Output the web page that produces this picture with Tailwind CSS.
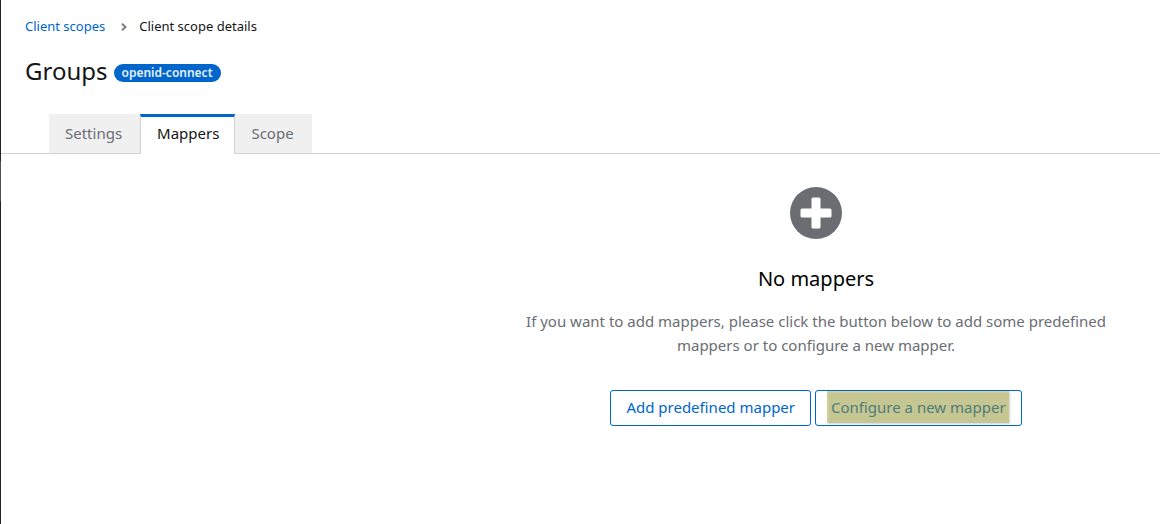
<!DOCTYPE html>
<html lang="en">
<head>
<meta charset="utf-8">
<meta name="viewport" content="width=device-width, initial-scale=1">
<title>Client scope details</title>
<script src="https://cdn.jsdelivr.net/npm/@tailwindcss/browser@4"></script>
</head>
<body class="flex min-h-screen bg-white font-['Noto_Sans',sans-serif] text-[15px] text-[#151515]">
<div class="w-px shrink-0 bg-[#212427] pt-[161px]"><div class="h-10 bg-[#4f5255]"></div></div>
<div class="min-w-0 flex-1">
  <header class="px-6 pt-[17px]">
    <nav aria-label="Breadcrumb" class="flex h-5 items-center text-[13px]">
      <a href="#" class="text-[#0066cc]">Client scopes</a>
      <svg class="mr-3 ml-4 h-2 w-1.5" viewBox="0 0 6 8" fill="none" stroke="#7d8084" stroke-width="2" aria-hidden="true"><path d="M1 .7 4.500 4 1 7.300"/></svg>
      <span aria-current="page">Client scope details</span>
    </nav>
    <div class="mt-[19px] flex h-[30px] items-center gap-1.5">
      <h1 class="text-2xl">Groups</h1>
      <span class="mt-[3px] flex h-[18px] items-center rounded-full bg-[#0066cc] px-2 text-xs font-semibold text-[#e7f1fa]">openid-connect</span>
    </div>
  </header>
  <div role="tablist" class="mt-7 flex h-10 border-b border-[#d2d2d2] pl-12 text-[#6a6e73]">
    <button role="tab" aria-selected="false" class="h-[39px] bg-[#f0f0f0] pr-[18px] pl-4">Settings</button>
    <button role="tab" aria-selected="true" class="h-10 border-x border-t-3 border-x-[#d2d2d2] border-t-[#0066cc] bg-white pr-[15px] pb-[5px] pl-4 text-[#151515]">Mappers</button>
    <button role="tab" aria-selected="false" class="h-[39px] bg-[#f0f0f0] pr-[18px] pl-4">Scope</button>
  </div>
  <main class="flex flex-col items-center pt-[33px] pl-[471px] text-center">
    <svg class="size-[52px]" viewBox="0 0 52 52" aria-hidden="true"><circle cx="26" cy="26" r="26" fill="#6a6e73"/><path fill="#fff" d="M23 10.500h6q1.500 0 1.500 1.500v9.500H40q1.500 0 1.500 1.500v6q0 1.500-1.500 1.500h-9.500V40q0 1.500-1.500 1.500h-6q-1.500 0-1.500-1.500v-9.500H12q-1.500 0-1.500-1.500v-6q0-1.500 1.500-1.500h9.500V12q0-1.500 1.500-1.500z"/></svg>
    <h2 class="mt-6 text-xl leading-8 text-black">No mappers</h2>
    <p class="mt-[14px] max-w-[600px] leading-6 text-[#6a6e73]">If you want to add mappers, please click the button below to add some predefined mappers or to configure a new mapper.</p>
    <div class="mt-[33px] flex gap-1 text-[#0066cc]">
      <button class="h-9 rounded-[3px] border border-[#0066cc] px-[15px] pb-0.5">Add predefined mapper</button>
      <button class="relative h-9 rounded-[3px] border border-[#0066cc] px-[15px] pb-0.5">Configure a new mapper<span class="absolute top-0 right-3 bottom-0.5 left-[11px] bg-[#90922e]/52 shadow-[1px_1px_2px_#00000030,inset_2px_2px_2px_#dcdca080]"></span></button>
    </div>
  </main>
</div>
</body>
</html>
